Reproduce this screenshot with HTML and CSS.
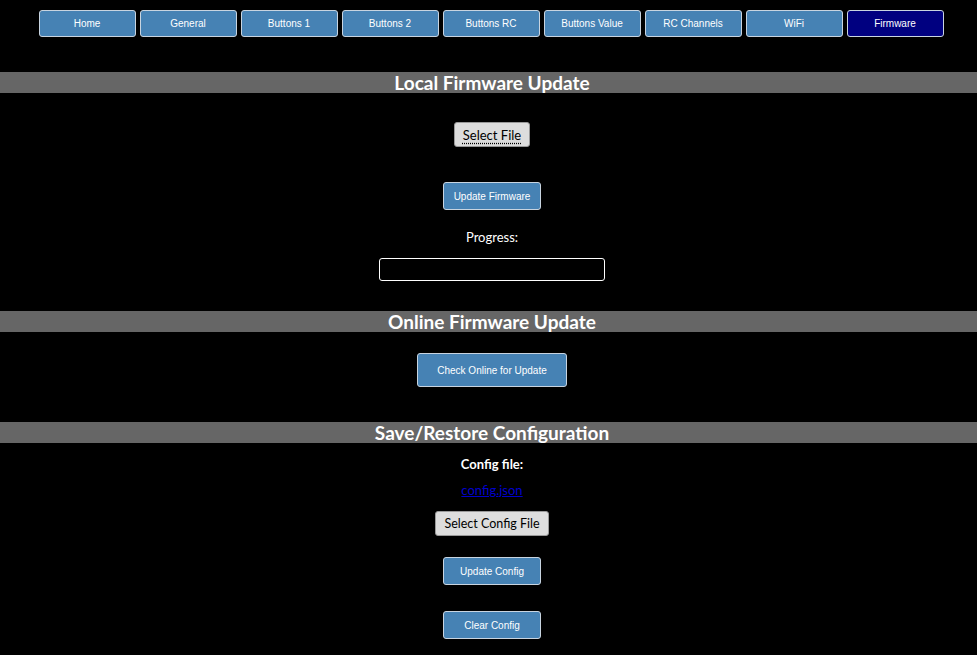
FILE: index.html
```html
<!DOCTYPE html>
<html>
<head>
<meta charset="utf-8">
<link rel="stylesheet" href="styles.css">
</head>
<body>
<nav class="nav">
  <button class="tab">Home</button>
  <button class="tab">General</button>
  <button class="tab">Buttons 1</button>
  <button class="tab">Buttons 2</button>
  <button class="tab">Buttons RC</button>
  <button class="tab">Buttons Value</button>
  <button class="tab">RC Channels</button>
  <button class="tab">WiFi</button>
  <button class="tab active">Firmware</button>
</nav>

<h2 class="bar bar-first">Local Firmware Update</h2>
<section class="body">
  <button class="file-btn m-select">Select File</button>
  <button class="blue-btn m-update">Update Firmware</button>
  <div class="label m-progress">Progress:</div>
  <div class="progress"></div>
</section>

<h2 class="bar bar-online">Online Firmware Update</h2>
<section class="body">
  <button class="blue-btn big m-check">Check Online for Update</button>
</section>

<h2 class="bar bar-save">Save/Restore Configuration</h2>
<section class="body">
  <div class="label bold m-config">Config file:</div>
  <a class="link m-link" href="#">config.json</a>
  <button class="file-btn wide m-selcfg">Select Config File</button>
  <button class="blue-btn m-updcfg">Update Config</button>
  <button class="blue-btn m-clear">Clear Config</button>
</section>
</body>
</html>
```

FILE: styles.css
```css
html, body {
  margin: 0;
  padding: 0;
  background: #000;
  color: #fff;
  font-family: "DejaVu Sans", sans-serif;
}

.nav {
  display: flex;
  justify-content: center;
  gap: 4px;
  padding: 10px 0 0 5px;
}

.tab {
  width: 97px;
  height: 27px;
  background: #4682b4;
  color: #fff;
  border: 1px solid #c8d4e0;
  border-radius: 3px;
  font-family: "Liberation Sans", Arial, sans-serif;
  font-size: 10px;
  padding: 0;
}

.tab.active {
  background: #000080;
}

.bar {
  margin: 0;
  height: 21px;
  line-height: 21px;
  background: #666;
  color: #fff;
  text-align: center;
  font-family: "Lato", sans-serif;
  font-weight: bold;
  font-size: 19px;
  padding-left: 7px;
}

.bar-first { margin-top: 35px; }
.bar-online { margin-top: 30px; }
.bar-save { margin-top: 35px; }

.body {
  display: flex;
  flex-direction: column;
  align-items: center;
  padding-left: 7px;
}

.file-btn {
  width: 76px;
  height: 25px;
  background: #ddd;
  color: #000;
  border: 1px solid #999;
  border-radius: 3px;
  font-family: "Lato", sans-serif;
  font-size: 13px;
  padding: 0;
  text-decoration: underline dotted;
  text-underline-offset: 3px;
}

.file-btn.wide {
  width: 114px;
  height: 25px;
  text-decoration: none;
  font-size: 12.5px;
}

.blue-btn {
  width: 98px;
  height: 28px;
  background: #4682b4;
  color: #fff;
  border: 1px solid #c8d4e0;
  border-radius: 3px;
  font-family: "Liberation Sans", Arial, sans-serif;
  font-size: 10px;
  padding: 0;
}

.blue-btn.big {
  width: 150px;
  height: 34px;
}

.label {
  font-family: "Lato", sans-serif;
  font-size: 13px;
  line-height: 16px;
}

.label.bold { font-weight: bold; }

.progress {
  margin-top: 13px;
  width: 224px;
  height: 21px;
  border: 1px solid #fff;
  border-radius: 3px;
}

.link {
  color: #0000cc;
  font-family: "Lato", sans-serif;
  font-size: 13px;
  line-height: 16px;
}

.m-select { margin-top: 29px; }
.m-update { margin-top: 35px; }
.m-progress { margin-top: 19px; }
.m-check { margin-top: 21px; }
.m-config { margin-top: 13px; }
.m-link { margin-top: 10px; }
.m-selcfg { margin-top: 13px; }
.m-updcfg { margin-top: 21px; }
.m-clear { margin-top: 26px; }
```
